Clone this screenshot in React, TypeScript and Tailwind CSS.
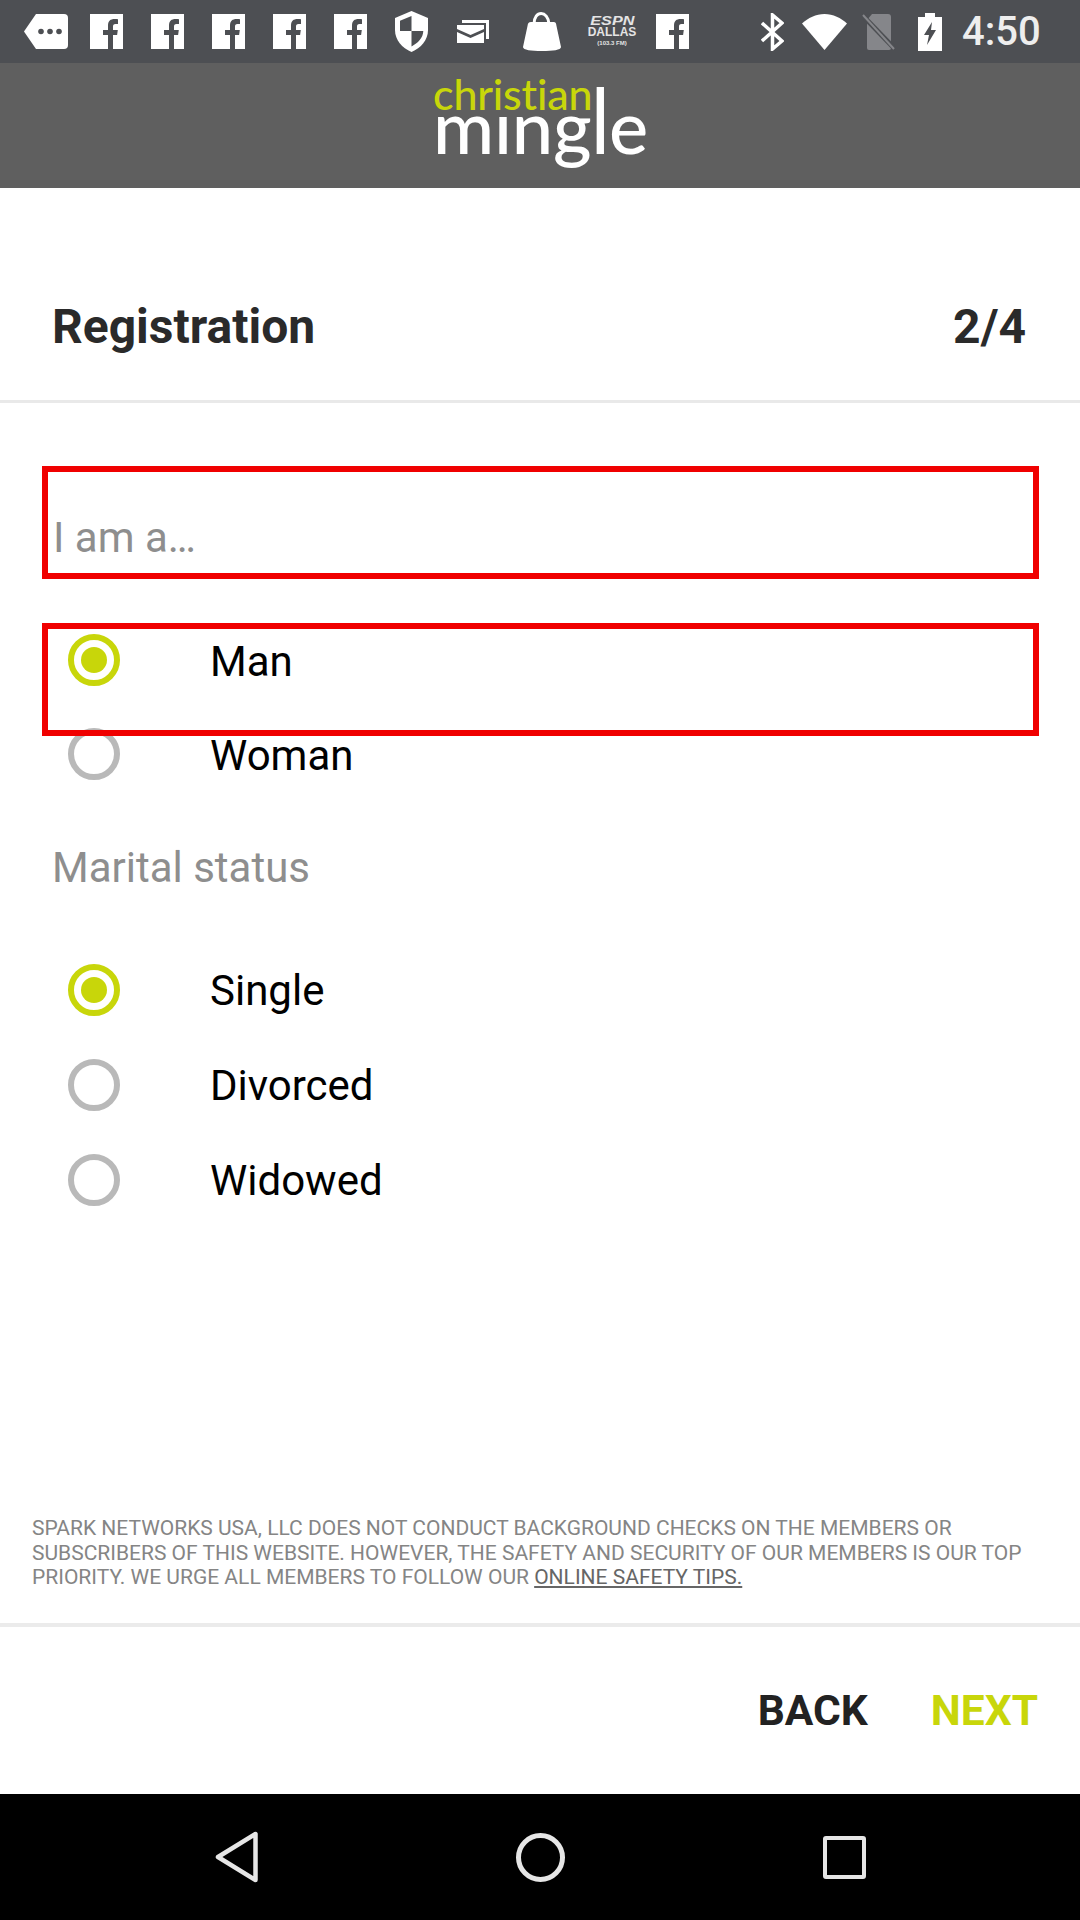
import React from "react";

function Fb({ className }: { className: string }) {
  return (
    <svg className={className} width="33" height="35" viewBox="0 0 33 35">
      <rect width="33" height="35" fill="#fff" />
      <path d="M18 35V21h-5v-5h5v-4.500C18 7 20.600 5 24.500 5c1.500 0 2.700.1 3.500.2v4.800h-2.500c-2 0-2.500 1-2.500 2.400V16h4.800l-.7 5H23v14z" fill="#4d4f53" />
    </svg>
  );
}

function Radio({ checked }: { checked?: boolean }) {
  return (
    <div
      className={
        "w-[52px] h-[52px] shrink-0 rounded-full border-[6px] flex items-center justify-center " +
        (checked ? "border-[#c8d60a]" : "border-[#b9b9b9]")
      }
    >
      {checked && <div className="w-[26px] h-[26px] rounded-full bg-[#c8d60a]" />}
    </div>
  );
}

function Row({ label, checked, h = "h-[94px]" }: { label: string; checked?: boolean; h?: string }) {
  return (
    <div className={"flex items-center pl-[68px] " + h}>
      <Radio checked={checked} />
      <span className="ml-[90px] mt-[3px] text-[42px] leading-[48px] text-black">{label}</span>
    </div>
  );
}

export default function App() {
  return (
    <div className="w-[1080px] h-[1920px] flex flex-col bg-white overflow-hidden font-['Roboto',sans-serif]">
      {/* status bar */}
      <div className="h-[63px] shrink-0 bg-[#4d4f53] flex items-center">
        <svg className="ml-[24px]" width="44" height="35" viewBox="0 0 44 35">
          <path d="M12 0h28a4 4 0 0 1 4 4v27a4 4 0 0 1-4 4H12L0 17.500z" fill="#fff" />
          <circle cx="17" cy="17.500" r="2.800" fill="#4d4f53" />
          <circle cx="26" cy="17.500" r="2.800" fill="#4d4f53" />
          <circle cx="35" cy="17.500" r="2.800" fill="#4d4f53" />
        </svg>
        <Fb className="ml-[22px]" />
        <Fb className="ml-[28px]" />
        <Fb className="ml-[28px]" />
        <Fb className="ml-[28px]" />
        <Fb className="ml-[28px]" />
        <svg className="ml-[28px]" width="33" height="41" viewBox="0 0 33 41">
          <path d="M16.500 0L33 7v12c0 10-7 18-16.500 22C7 37 0 29 0 19V7z" fill="#fff" />
          <path d="M16.500 5L5 9.800V20h11.500zM16.500 20v15.500C23 32 28 27 28.300 20z" fill="#4d4f53" />
        </svg>
        <svg className="ml-[29px]" width="32" height="23" viewBox="0 0 32 23">
          <path d="M5 0h27v19h-3V3H5z" fill="#fff" />
          <path d="M0 5h27v4L13.500 15 0 9zM0 12l13.500 6L27 12v11H0z" fill="#fff" />
        </svg>
        <svg className="ml-[26px]" width="54" height="39" viewBox="0 0 54 39">
          <path d="M19 12C19-2 33-2 34 12" fill="none" stroke="#fff" strokeWidth="3" />
          <path d="M16 10h22c3 0 3 1 3.500 4L46 35c0 3-8 4-19 4S8 38 8 35l4.500-21c.5-3 1-4 3.500-4z" fill="#fff" />
        </svg>
        <div className="ml-[23px] w-[40px] h-[32px] flex flex-col items-center justify-center text-[#e4e4e4] font-['Liberation_Sans',sans-serif] font-bold">
          <span className="text-[12px] leading-[10px] italic scale-x-[1.35]">ESPN</span>
          <span className="text-[12px] leading-[13px]">DALLAS</span>
          <span className="text-[6px] leading-[8px]">(103.3 FM)</span>
        </div>
        <Fb className="ml-[24px]" />
        <svg className="ml-[72px]" width="23" height="38" viewBox="0 0 23 38">
          <path d="M1 10l20 18-9.500 8V2L21 10 1 28" fill="none" stroke="#fff" strokeWidth="3.500" />
        </svg>
        <svg className="ml-[18px]" width="45" height="36" viewBox="0 0 45 36">
          <path d="M0 9.500C6 4 14 0 22.500 0S39 4 45 9.500L22.500 36z" fill="#fff" />
        </svg>
        <svg className="ml-[15px]" width="34" height="36" viewBox="0 0 34 36">
          <path d="M10 0h16a3 3 0 0 1 3 3v31a2 2 0 0 1-2 2H7a2 2 0 0 1-2-2V6z" fill="#85868a" />
          <path d="M1 2l32 33" stroke="#4d4f53" strokeWidth="5" />
          <path d="M1 1l31 34" stroke="#85868a" strokeWidth="2" />
        </svg>
        <svg className="ml-[22px]" width="24" height="38" viewBox="0 0 24 38">
          <path d="M7 0h10v4h7v34H0V4h7z" fill="#fff" />
          <path d="M14 9L6 22h5l-2 10 9-15h-5z" fill="#4d4f53" />
        </svg>
        <span className="ml-[20px] text-[40px] leading-[48px] font-medium text-[#eeeeee]">4:50</span>
      </div>

      {/* header with logo */}
      <div className="h-[125px] shrink-0 bg-[#5f5f5f] flex justify-center">
        <div className="w-[214px] h-full pt-[9px] font-['Lato',sans-serif] font-medium flex flex-col">
          <span className="text-[43px] leading-[43px] tracking-[-0.2px] text-[#c8d60a]">christian</span>
          <span className="mt-[-26px] text-[74px] leading-[74px] text-white tracking-[-0.2px] whitespace-nowrap">
            mıng<span className="inline-block origin-[50%_65.6px] scale-y-[1.22]">l</span>e
          </span>
        </div>
      </div>

      {/* title */}
      <div className="h-[215px] shrink-0 pt-[115px] px-[52px] flex justify-between border-b-[3px] border-[#e9e9e9]">
        <span className="text-[48px] leading-[48px] font-bold text-[#2a2a2a]">Registration</span>
        <span className="text-[48px] leading-[48px] font-bold text-[#2a2a2a] mr-[2px]">2/4</span>
      </div>

      {/* I am a */}
      <div className="ml-[42px] mr-[41px] mt-[63px] h-[113px] shrink-0 border-[6px] border-[#f00000] pl-[5px] pt-[42px] text-[42px] leading-[48px] text-[#8e8e8e]">
        I am a…
      </div>

      {/* gender */}
      <div className="relative mt-[34px] shrink-0">
        <Row label="Man" checked />
        <Row label="Woman" />
        <div className="absolute left-[42px] right-[41px] top-[10px] h-[113px] border-[6px] border-[#f00000]" />
      </div>

      {/* marital */}
      <div className="pl-[52px] mt-[43px] text-[42px] leading-[48px] text-[#8e8e8e]">Marital status</div>
      <div className="mt-[50px] shrink-0">
        <Row label="Single" checked h="h-[95px]" />
        <Row label="Divorced" h="h-[95px]" />
        <Row label="Widowed" h="h-[95px]" />
      </div>

      <div className="flex-1" />

      {/* disclaimer */}
      <div className="pl-[32px] pr-[48px] pb-[33px] text-[21px] leading-[24.6px] text-[#858585]">
        SPARK NETWORKS USA, LLC DOES NOT CONDUCT BACKGROUND CHECKS ON THE MEMBERS OR SUBSCRIBERS OF THIS WEBSITE. HOWEVER, THE SAFETY AND SECURITY OF OUR MEMBERS IS OUR TOP PRIORITY. WE URGE ALL MEMBERS TO FOLLOW OUR <span className="underline text-[#666666]">ONLINE SAFETY TIPS.</span>
      </div>
      <div className="h-[4px] shrink-0 bg-[#ebebeb]" />

      {/* actions */}
      <div className="h-[167px] shrink-0 flex items-center justify-end pr-[42px] gap-[63px] text-[42.5px] leading-[48px] font-bold">
        <span className="text-[#222222]">BACK</span>
        <span className="text-[#c8d60a]">NEXT</span>
      </div>

      {/* nav bar */}
      <div className="h-[126px] shrink-0 bg-black relative">
        <svg className="absolute left-[214px] top-[37px]" width="46" height="52" viewBox="0 0 46 52">
          <path d="M41.500 3v46L4 26z" fill="none" stroke="#e6e6e6" strokeWidth="4.500" strokeLinejoin="round" />
        </svg>
        <div className="absolute left-[516px] top-[39px] w-[49px] h-[49px] rounded-full border-[5px] border-[#e6e6e6]" />
        <div className="absolute left-[823px] top-[42px] w-[43px] h-[43px] rounded-[3px] border-[4px] border-[#e6e6e6]" />
      </div>
    </div>
  );
}
